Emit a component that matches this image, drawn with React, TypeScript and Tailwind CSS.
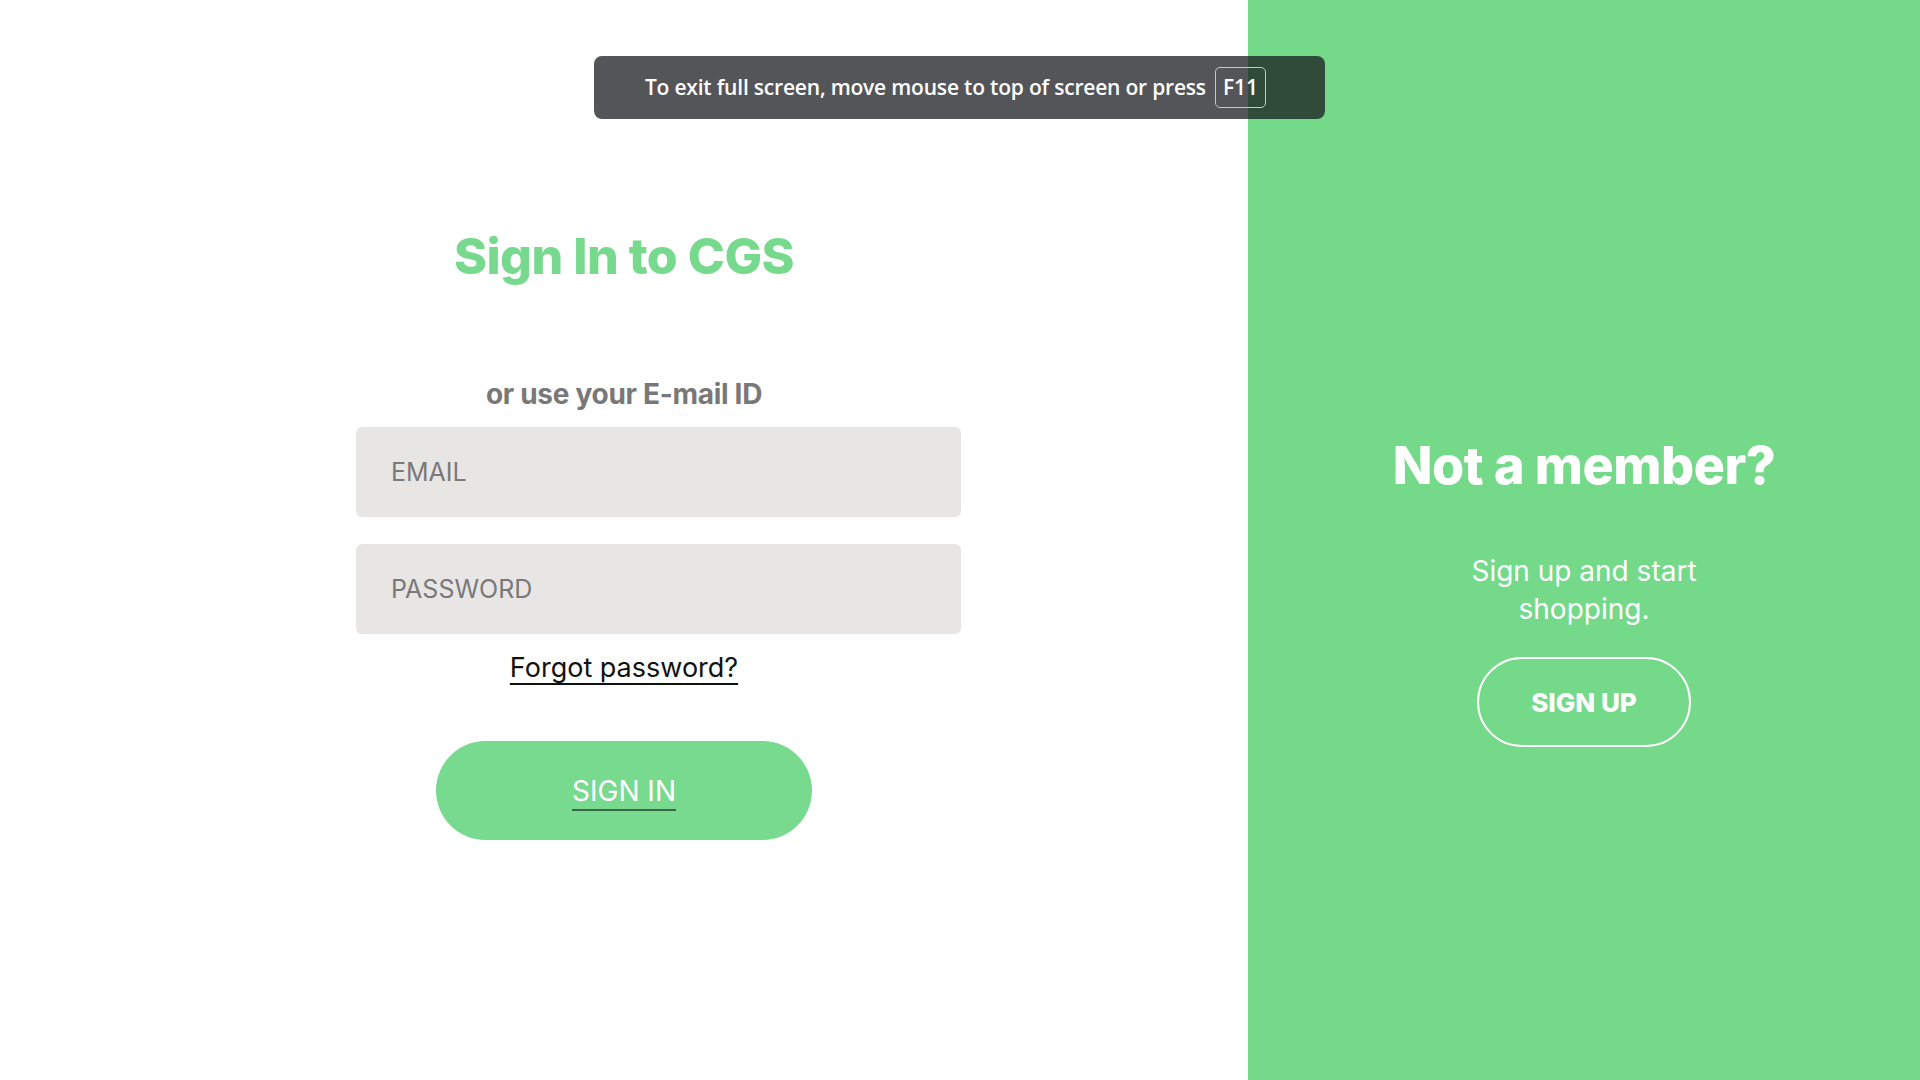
import { useState } from 'react'

const poppins = { fontFamily: 'Inter, "Noto Sans", sans-serif' }

function FullscreenToast() {
  return (
    <div className="absolute left-[594px] top-[56px] z-10 flex h-[63px] w-[731px] items-center justify-center gap-[9px] rounded-lg bg-[rgba(24,26,30,0.74)] pr-[8px] text-white">
      <span className="text-[21px] font-semibold tracking-[-0.2px]" style={{ fontFamily: '"Open Sans", sans-serif' }}>
        To exit full screen, move mouse to top of screen or press
      </span>
      <span
        className="flex h-[41px] items-center rounded-[5px] border border-[#c8c8c8] px-[7px] text-[21px] font-semibold"
        style={{ fontFamily: '"Open Sans", sans-serif' }}
      >
        F11
      </span>
    </div>
  )
}

function SignInForm() {
  const [email, setEmail] = useState('')
  const [password, setPassword] = useState('')

  return (
    <div className="flex w-[1248px] flex-col items-center bg-white" style={poppins}>
      <h1 className="mt-[224px] text-[50px] leading-[64px] font-extrabold tracking-[-0.5px] text-[#77d98d]">
        Sign In to CGS
      </h1>

      <p className="mt-[89px] text-[28px] leading-[34px] font-bold tracking-[-0.3px] text-[#787878]">or use your E-mail ID</p>

      <div className="mt-[16px] w-[536px]">
        <input
          value={email}
          onChange={e => setEmail(e.target.value)}
          placeholder="EMAIL"
          className="box-border h-[90px] w-[605px] rounded-md bg-[#e8e6e5] px-[35px] text-[25px] text-[#333] outline-none placeholder:text-[#797979]"
        />
        <input
          type="password"
          value={password}
          onChange={e => setPassword(e.target.value)}
          placeholder="PASSWORD"
          className="mt-[27px] box-border h-[90px] w-[605px] rounded-md bg-[#e8e6e5] px-[35px] text-[25px] text-[#333] outline-none placeholder:text-[#797979]"
        />
      </div>

      <a href="#" className="mt-[17px] text-[27px] leading-[34px] text-[#111] underline decoration-[2px] underline-offset-[6px]">
        Forgot password?
      </a>

      <button className="mt-[56px] flex h-[99px] w-[376px] items-center justify-center rounded-full bg-[#78da8e]">
        <span className="text-[28px] text-white underline decoration-[#3a6a45] decoration-[2px] underline-offset-[8px]">SIGN IN</span>
      </button>
    </div>
  )
}

function SignUpPanel() {
  return (
    <div className="flex flex-1 flex-col items-center bg-[#75d98a] text-white" style={poppins}>
      <h2 className="mt-[434px] text-[52px] leading-[64px] font-extrabold tracking-[-0.5px]">Not a member?</h2>
      <p className="mt-[54px] w-[300px] text-center text-[28px] leading-[38px]">Sign up and start shopping.</p>
      <button className="mt-[29px] flex h-[90px] w-[214px] items-center justify-center rounded-full border-2 border-white text-[26px] font-extrabold">
        SIGN UP
      </button>
    </div>
  )
}

export default function App() {
  return (
    <div className="relative flex h-[1080px] w-[1920px] overflow-hidden">
      <SignInForm />
      <SignUpPanel />
      <FullscreenToast />
    </div>
  )
}
